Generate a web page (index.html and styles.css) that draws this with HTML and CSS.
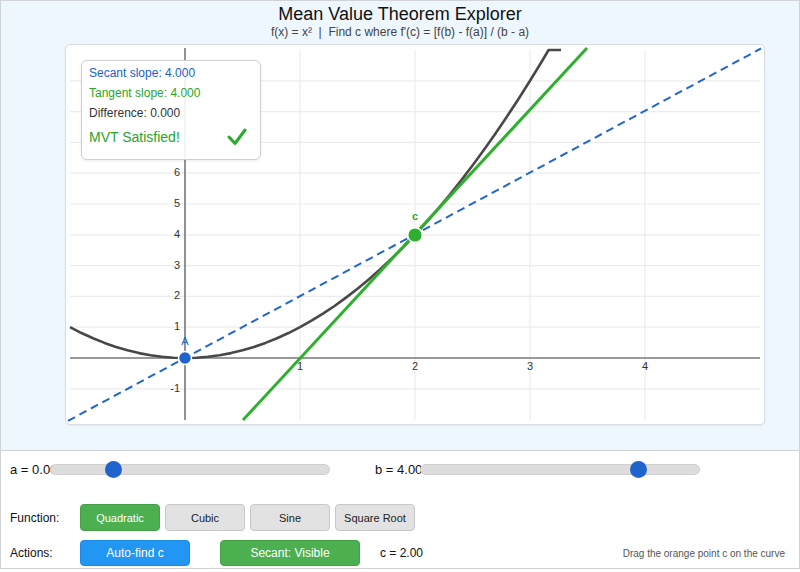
FILE: index.html
```html
<!DOCTYPE html>
<html>
<head>
<meta charset="utf-8">
<link rel="stylesheet" href="styles.css">
</head>
<body>
<div class="app">
  <section class="stage">
    <h1 class="title">Mean Value Theorem Explorer</h1>
    <div class="subtitle">f(x) = x²&nbsp; |&nbsp; Find c where f'(c) = [f(b) - f(a)] / (b - a)</div>
    <div class="card">
      <svg class="plot" width="698" height="379" viewBox="66 45 698 379">
        <g class="grid">
          <line x1="70" y1="388.8" x2="760" y2="388.8"/>
          <line x1="70" y1="327.2" x2="760" y2="327.2"/>
          <line x1="70" y1="296.4" x2="760" y2="296.4"/>
          <line x1="70" y1="265.6" x2="760" y2="265.6"/>
          <line x1="70" y1="234.8" x2="760" y2="234.8"/>
          <line x1="70" y1="204" x2="760" y2="204"/>
          <line x1="70" y1="173.2" x2="760" y2="173.2"/>
          <line x1="70" y1="142.4" x2="760" y2="142.4"/>
          <line x1="70" y1="111.6" x2="760" y2="111.6"/>
          <line x1="70" y1="80.8" x2="760" y2="80.8"/>
          <line x1="300" y1="50" x2="300" y2="420"/>
          <line x1="415" y1="50" x2="415" y2="420"/>
          <line x1="530" y1="50" x2="530" y2="420"/>
          <line x1="645" y1="50" x2="645" y2="420"/>
        </g>
        <g class="axes">
          <line x1="70" y1="358" x2="760" y2="358"/>
          <line x1="185" y1="48" x2="185" y2="420"/>
        </g>
        <g class="ylabels">
          <text x="180" y="389">-1</text>
          <text x="180" y="327">1</text>
          <text x="180" y="296">2</text>
          <text x="180" y="266">3</text>
          <text x="180" y="235">4</text>
          <text x="180" y="204">5</text>
          <text x="180" y="173">6</text>
        </g>
        <g class="xlabels">
          <text x="300" y="367">1</text>
          <text x="415" y="367">2</text>
          <text x="530" y="367">3</text>
          <text x="645" y="367">4</text>
        </g>
        <path class="curve" d="M70 327.2 L81.5 333.05 L93 338.3 L104.5 342.9 L116 346.9 L127.5 350.3 L139 353.1 L150.5 355.2 L162 356.8 L173.5 357.7 L185 358 L196.5 357.7 L208 356.8 L219.5 355.2 L231 353.1 L242.5 350.3 L254 346.9 L265.5 342.9 L277 338.3 L288.5 333.05 L300 327.2 L311.5 320.7 L323 313.6 L334.5 306 L346 297.6 L357.5 288.7 L369 279.2 L380.5 269 L392 258.2 L403.5 246.8 L415 234.8 L426.5 222.2 L438 208.9 L449.5 195.1 L461 180.6 L472.5 165.5 L484 149.8 L495.5 133.5 L507 116.5 L518.5 99 L530 80.8 L541.5 62 L548.6 50 L561 50"/>
        <line class="secant" x1="68" y1="420.8" x2="761" y2="48.5"/>
        <line class="tangent" x1="243" y1="420" x2="587" y2="48"/>
        <circle class="pt-a" cx="185" cy="358" r="6.5"/>
        <text class="lbl-a" x="185" y="342">A</text>
        <circle class="pt-c" cx="415" cy="235" r="7.3"/>
        <text class="lbl-c" x="415" y="217">c</text>
      </svg>
      <div class="info">
        <div class="info-line secant-txt">Secant slope: 4.000</div>
        <div class="info-line tangent-txt">Tangent slope: 4.000</div>
        <div class="info-line diff-txt">Difference: 0.000</div>
        <div class="status">
          <span>MVT Satisfied!</span>
          <svg class="check" width="20" height="18" viewBox="0 0 20 18"><polyline points="2,9 8,15.5 18,2"/></svg>
        </div>
      </div>
    </div>
  </section>
  <section class="panel">
    <div class="row sliders">
      <span class="slabel">a = 0.00</span>
      <div class="slider"><div class="thumb" style="left:54px"></div></div>
      <span class="slabel b">b = 4.00</span>
      <div class="slider"><div class="thumb" style="left:209px"></div></div>
    </div>
    <div class="row funcs">
      <span class="rlabel">Function:</span>
      <button class="btn green">Quadratic</button>
      <button class="btn">Cubic</button>
      <button class="btn">Sine</button>
      <button class="btn">Square Root</button>
    </div>
    <div class="row actions">
      <span class="rlabel">Actions:</span>
      <button class="btn blue wide1">Auto-find c</button>
      <button class="btn green wide2">Secant: Visible</button>
      <span class="cval">c = 2.00</span>
      <span class="hint">Drag the orange point c on the curve</span>
    </div>
  </section>
</div>
</body>
</html>
```
FILE: styles.css
```css
* { box-sizing: border-box; }
html, body { margin: 0; padding: 0; background: #fff; }
body { font-family: "Liberation Sans", Arial, sans-serif; color: #111; }
.app {
  width: 800px;
  height: 569px;
  border: 1px solid #cfd3d8;
  display: flex;
  flex-direction: column;
}
.stage {
  height: 449px;
  background: #eef6fe;
  padding-top: 2px;
}
.title {
  margin: 0;
  font-size: 18px;
  font-weight: normal;
  line-height: 22px;
  text-align: center;
  color: #111;
}
.subtitle {
  font-size: 12px;
  line-height: 15px;
  text-align: center;
  color: #444;
}
.card {
  position: relative;
  margin: 4px 0 0 64px;
  width: 700px;
  height: 381px;
  background: #fff;
  border: 1px solid #d9dde2;
  border-radius: 5px;
  box-shadow: 0 1px 2px rgba(0,0,0,0.06);
}
.plot { display: block; }
.grid line { stroke: #ececec; stroke-width: 1.2; }
.axes line { stroke: #777; stroke-width: 1.6; }
.ylabels text { font-size: 11px; fill: #333; text-anchor: end; dominant-baseline: middle; font-family: "Liberation Sans", Arial, sans-serif; }
.xlabels text { font-size: 11px; fill: #333; text-anchor: middle; dominant-baseline: middle; font-family: "Liberation Sans", Arial, sans-serif; }
.curve { fill: none; stroke: #484848; stroke-width: 2.6; stroke-linejoin: round; }
.secant { stroke: #2266cc; stroke-width: 2; stroke-dasharray: 8 5; }
.tangent { stroke: #2eb02e; stroke-width: 3; }
.pt-a { fill: #1f63cc; stroke: #fff; stroke-width: 1.5; }
.pt-c { fill: #2eae2e; stroke: #fff; stroke-width: 1.5; }
.lbl-a { font-size: 11px; fill: #1f63cc; text-anchor: middle; dominant-baseline: middle; font-family: "Liberation Sans", Arial, sans-serif; }
.lbl-c { font-size: 11px; fill: #2eae2e; text-anchor: middle; dominant-baseline: middle; font-weight: bold; font-family: "Liberation Sans", Arial, sans-serif; }
.info {
  position: absolute;
  left: 15px;
  top: 15px;
  width: 180px;
  height: 100px;
  background: rgba(255,255,255,0.9);
  border: 1px solid #cfcfcf;
  border-radius: 6px;
  padding: 2px 7px 0 7px;
  box-shadow: 0 1px 3px rgba(0,0,0,0.08);
}
.info-line { font-size: 12px; line-height: 20px; }
.secant-txt { color: #1a60c8; }
.tangent-txt { color: #2aa52a; }
.diff-txt { color: #333; }
.status {
  display: flex;
  align-items: center;
  justify-content: space-between;
  margin-top: 2px;
  height: 24px;
  font-size: 14px;
  color: #2aa52a;
}
.check { display: block; margin-right: 6px; }
.check polyline { fill: none; stroke: #2aaa2a; stroke-width: 3; stroke-linecap: round; stroke-linejoin: round; }
.panel {
  flex: 1;
  background: #fff;
  border-top: 1px solid #cfd3d8;
  padding: 7px 0 0 9px;
}
.row { display: flex; align-items: center; }
.sliders { height: 22px; }
.slabel {
  width: 40px;
  white-space: nowrap;
  font-size: 13px;
  color: #111;
}
.slabel.b { margin-left: 45px; width: 45px; }
.slider {
  position: relative;
  width: 280px;
  height: 11px;
  background: #dddddd;
  border: 1px solid #cfcfcf;
  border-radius: 6px;
}
.thumb {
  position: absolute;
  top: -4px;
  width: 17px;
  height: 17px;
  border-radius: 50%;
  background: #1f63cc;
}
.funcs { margin-top: 24px; }
.actions { margin-top: 9px; }
.rlabel { width: 70px; font-size: 12px; color: #111; }
.btn {
  font-family: "Liberation Sans", Arial, sans-serif;
  font-size: 11px;
  width: 80px;
  height: 27px;
  margin: 0 5px 0 0;
  padding: 0;
  border: 1px solid #c8c8c8;
  border-radius: 4px;
  background: #e2e2e2;
  color: #222;
}
.btn.green { background: #4caf50; border-color: #43a047; color: #fff; }
.btn.blue { background: #2196f3; border-color: #1e88e5; color: #fff; }
.wide1 { width: 110px; height: 26px; margin-right: 30px; font-size: 12px; }
.wide2 { width: 140px; height: 26px; margin-right: 20px; font-size: 12px; }
.cval { font-size: 12px; color: #111; }
.hint { margin-left: auto; margin-right: 14px; font-size: 10px; color: #555; }
```
